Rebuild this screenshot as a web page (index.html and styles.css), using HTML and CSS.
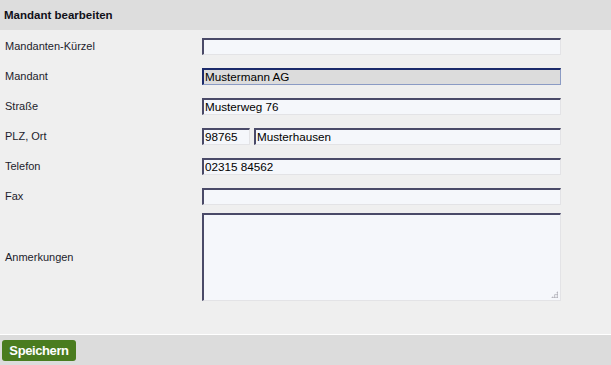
FILE: index.html
```html
<!DOCTYPE html>
<html lang="de">
<head>
    <meta charset="UTF-8">
    <title>Mandant bearbeiten</title>
    <link rel="stylesheet" href="styles.css">
</head>
<body>
    <div class="page">
        <div class="head">Mandant bearbeiten</div>

        <form class="form">
            <label class="label" for="kuerzel">Mandanten-Kürzel</label>
            <div class="field"><input class="input" id="kuerzel" type="text" value=""></div>

            <label class="label" for="mandant">Mandant</label>
            <div class="field"><input class="input readonly" id="mandant" type="text" value="Mustermann AG" readonly></div>

            <label class="label" for="strasse">Straße</label>
            <div class="field"><input class="input" id="strasse" type="text" value="Musterweg 76"></div>

            <label class="label" for="plz">PLZ, Ort</label>
            <div class="field">
                <input class="input plz" id="plz" type="text" value="98765">
                <input class="input" id="ort" type="text" value="Musterhausen">
            </div>

            <label class="label" for="telefon">Telefon</label>
            <div class="field"><input class="input" id="telefon" type="text" value="02315 84562"></div>

            <label class="label" for="fax">Fax</label>
            <div class="field"><input class="input" id="fax" type="text" value=""></div>

            <label class="label" for="notes">Anmerkungen</label>
            <div class="field area"><textarea class="input notes" id="notes"></textarea></div>
        </form>

        <div class="foot">
            <button class="save" type="button">Speichern</button>
        </div>
    </div>
</body>
</html>
```

FILE: styles.css
```css
html, body {
    margin: 0;
    padding: 0;
    height: 100%;
}

body {
    font-family: "Liberation Sans", Arial, sans-serif;
    font-size: 11px;
    color: #1c1c2c;
    background: #efefef;
}

.page {
    display: flex;
    flex-direction: column;
    height: 365px;
}

.head {
    height: 30px;
    line-height: 30px;
    padding-left: 4px;
    background: #dddddd;
    font-size: 11.5px;
    font-weight: bold;
    color: #101018;
}

.form {
    flex: 1;
    display: grid;
    grid-template-columns: 202px 359px;
    grid-template-rows: repeat(6, 30px) 92px;
    align-items: center;
    padding-top: 1px;
}

.label {
    padding-left: 5px;
}

.field {
    display: flex;
    gap: 4px;
}

.field.area {
    position: relative;
    padding: 2px 0;
}

/* resize grip, drawn over the textarea corner */
.field.area::after {
    content: "";
    position: absolute;
    right: 3px;
    bottom: 5px;
    width: 7px;
    height: 7px;
    background:
        radial-gradient(circle, #a8a8b0 0.8px, transparent 1px) 0 0 / 2.5px 2.5px;
    clip-path: polygon(100% 0, 100% 100%, 0 100%);
    pointer-events: none;
}

.input {
    box-sizing: border-box;
    width: 100%;
    height: 17px;
    margin: 0;
    padding: 0 1px;
    border-style: solid;
    border-width: 2px 1px 1px 2px;
    border-color: #4a4a68 #e3e3e6 #e3e3e6 #4a4a68;
    background: #f5f7fb;
    font-family: "Liberation Sans", Arial, sans-serif;
    font-size: 11.7px;
    color: #000;
    outline: none;
}

.input.readonly {
    background: #dcdcdc;
    border-color: #1b2a6a #8b9bc4 #8b9bc4 #1b2a6a;
}

.input.plz {
    width: 48px;
    flex: none;
}

.notes {
    height: 88px;
    resize: none;
}

.foot {
    height: 31px;
    box-sizing: border-box;
    border-top: 1px solid #ffffff;
    background: #dcdcdc;
    padding: 5px 2px;
}

.save {
    display: block;
    width: 74px;
    height: 21px;
    padding: 0;
    border: none;
    border-radius: 3px;
    background: #4a7c1f;
    color: #ffffff;
    font-family: "Liberation Sans", Arial, sans-serif;
    font-size: 13px;
    font-weight: bold;
    letter-spacing: -0.4px;
    cursor: pointer;
}
```
